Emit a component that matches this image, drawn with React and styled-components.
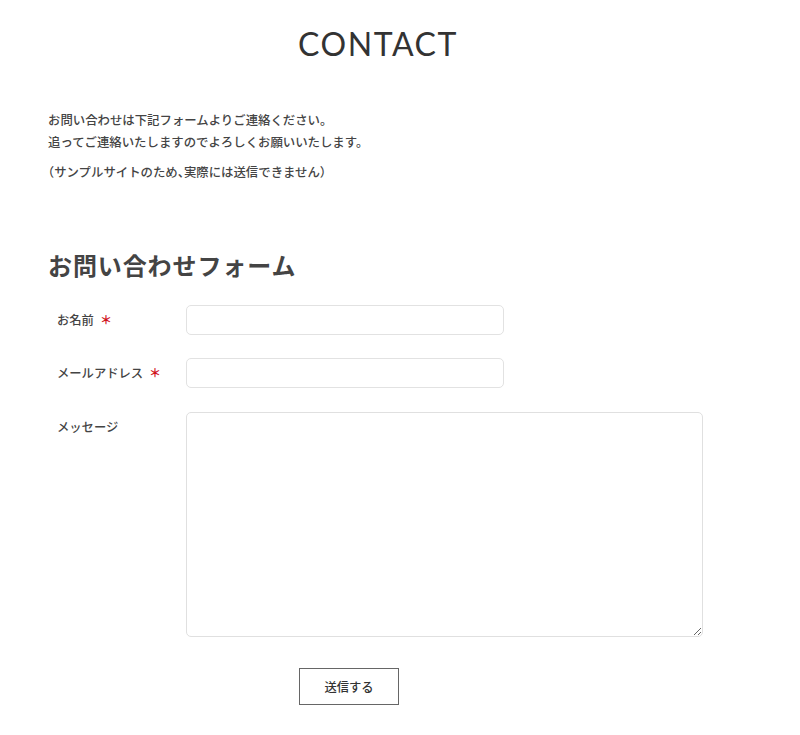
import React from 'react';
import styled, { createGlobalStyle } from 'styled-components';

const GlobalStyle = createGlobalStyle`
	body {
		margin: 0;
		background: #fff;
		color: #333;
		font-family: 'Noto Sans CJK JP', 'Noto Sans', sans-serif;
	}
`;

const Page = styled.div`
	width: 660px;
	margin-left: 48px;
	padding-top: 24px;
	box-sizing: border-box;
`;

const Title = styled.h1`
	margin: 0;
	text-align: center;
	font-family: Lato, 'Liberation Sans', sans-serif;
	font-weight: 400;
	font-size: 32px;
	letter-spacing: 1.6px;
	line-height: 40px;
	color: #333;
`;

const Intro = styled.div`
	margin-top: 45px;
	font-size: 12.4px;
	font-weight: 500;
	color: #444;
`;

const Paragraph = styled.p`
	margin: 0 0 ${(props) => (props.last ? '0' : '8px')};
	line-height: 22px;
	font-feature-settings: ${(props) => (props.last ? "'halt'" : 'normal')};
`;

const FormTitle = styled.h2`
	margin: 65px 0 0;
	font-size: 24px;
	font-weight: 700;
	letter-spacing: 0.9px;
	line-height: 34px;
	color: #444;
`;

const Form = styled.form`
	margin-top: 23px;
	display: flex;
	flex-direction: column;
	gap: 23px;
`;

const Row = styled.div`
	display: flex;
	align-items: flex-start;
	margin-top: ${(props) => (props.offset ? `${props.offset}px` : '0')};
`;

const Label = styled.label`
	width: 138px;
	padding-left: 9px;
	box-sizing: border-box;
	font-size: 12.3px;
	font-weight: 500;
	color: #444;
	line-height: 30px;
	white-space: nowrap;
`;

const Required = styled.span`
	color: #d0121b;
	margin-left: 6px;
	font-size: 12px;
	font-weight: 700;
`;

const Input = styled.input`
	width: 318px;
	height: 30px;
	box-sizing: border-box;
	border: 1.5px solid #e2e2e2;
	border-radius: 5px;
	background: #fff;
	outline: none;
`;

const TextArea = styled.textarea`
	width: 517px;
	height: 225px;
	box-sizing: border-box;
	border: 1.5px solid #e0e0e0;
	border-radius: 5px;
	background: #fff;
	outline: none;
	margin: 0;
`;

const ButtonRow = styled.div`
	display: flex;
	padding-left: 251px;
	margin-top: 8px;
`;

const SubmitButton = styled.button`
	width: 100px;
	height: 37px;
	background: #fff;
	border: 1px solid #666;
	font-family: 'Noto Sans CJK JP', sans-serif;
	font-size: 12.3px;
	font-weight: 500;
	color: #333;
	cursor: pointer;
`;

const App = () => {
	return (
		<>
			<GlobalStyle />
			<Page>
				<Title>CONTACT</Title>
				<Intro>
					<Paragraph>
						お問い合わせは下記フォームよりご連絡ください。
						<br />
						追ってご連絡いたしますのでよろしくお願いいたします。
					</Paragraph>
					<Paragraph last>（サンプルサイトのため、実際には送信できません）</Paragraph>
				</Intro>
				<FormTitle>お問い合わせフォーム</FormTitle>
				<Form onSubmit={(e) => e.preventDefault()}>
					<Row>
						<Label>
							お名前<Required>＊</Required>
						</Label>
						<Input type="text" />
					</Row>
					<Row>
						<Label>
							メールアドレス<Required>＊</Required>
						</Label>
						<Input type="email" />
					</Row>
					<Row offset={1}>
						<Label>メッセージ</Label>
						<TextArea />
					</Row>
					<ButtonRow>
						<SubmitButton type="submit">送信する</SubmitButton>
					</ButtonRow>
				</Form>
			</Page>
		</>
	);
};

export default App;
